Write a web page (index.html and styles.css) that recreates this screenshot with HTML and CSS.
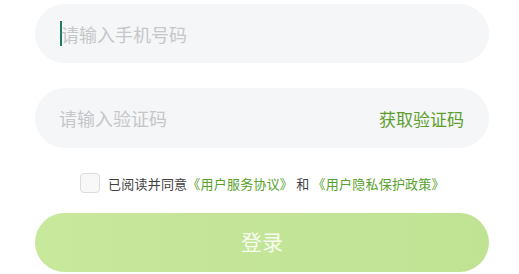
FILE: index.html
```html
<!DOCTYPE html>
<html lang="zh">
<head>
<meta charset="utf-8">
<link rel="stylesheet" href="styles.css">
</head>
<body>
<div class="form">
  <div class="field">
    <span class="caret"></span>
    <span class="placeholder">请输入手机号码</span>
  </div>
  <div class="field field-code">
    <span class="placeholder">请输入验证码</span>
    <span class="get-code">获取验证码</span>
  </div>
  <div class="agree">
    <span class="checkbox"></span>
    <span class="agree-text">已阅读并同意<span class="link">《用户服务协议》</span> 和 <span class="link">《用户隐私保护政策》</span></span>
  </div>
  <div class="login-btn">登录</div>
</div>
</body>
</html>
```

FILE: styles.css
```css
html, body {
  margin: 0;
  padding: 0;
  background: #ffffff;
  font-family: "Noto Sans CJK SC", "Noto Sans", sans-serif;
}
.form {
  width: 454px;
  margin-left: 35px;
  padding-top: 4px;
  display: flex;
  flex-direction: column;
}
.field {
  height: 59px;
  border-radius: 30px;
  background: #f5f6f8;
  display: flex;
  align-items: center;
  padding: 0 25px 0 25px;
  box-sizing: border-box;
}
.field-code {
  margin-top: 25px;
  height: 60px;
  justify-content: space-between;
}
.caret {
  width: 2px;
  height: 25px;
  background: #1f7a62;
  margin-right: -1px;
}
.placeholder {
  font-size: 18px;
  color: #c6c7c9;
  line-height: 1;
}
.field-code .placeholder {
  margin-left: -1px;
}
.get-code {
  font-size: 17px;
  color: #5d9e2d;
  line-height: 1;
}
.agree {
  margin-top: 25px;
  height: 20px;
  display: flex;
  align-items: center;
  padding-left: 45px;
}
.checkbox {
  width: 18px;
  height: 18px;
  border: 1px solid #dcdcdc;
  border-radius: 4px;
  background: #f8f8f8;
  margin-right: 8px;
}
.agree-text {
  font-size: 13px;
  color: #3f3f3f;
  white-space: nowrap;
  letter-spacing: 0.22px;
}
.link {
  color: #55a12b;
}
.login-btn {
  margin-top: 20px;
  height: 59px;
  border-radius: 30px;
  background: linear-gradient(90deg, #c8e89c, #bfe293);
  color: #f7fcef;
  font-size: 21px;
  display: flex;
  align-items: center;
  justify-content: center;
  padding-bottom: 3px;
  box-sizing: border-box;
}
```
